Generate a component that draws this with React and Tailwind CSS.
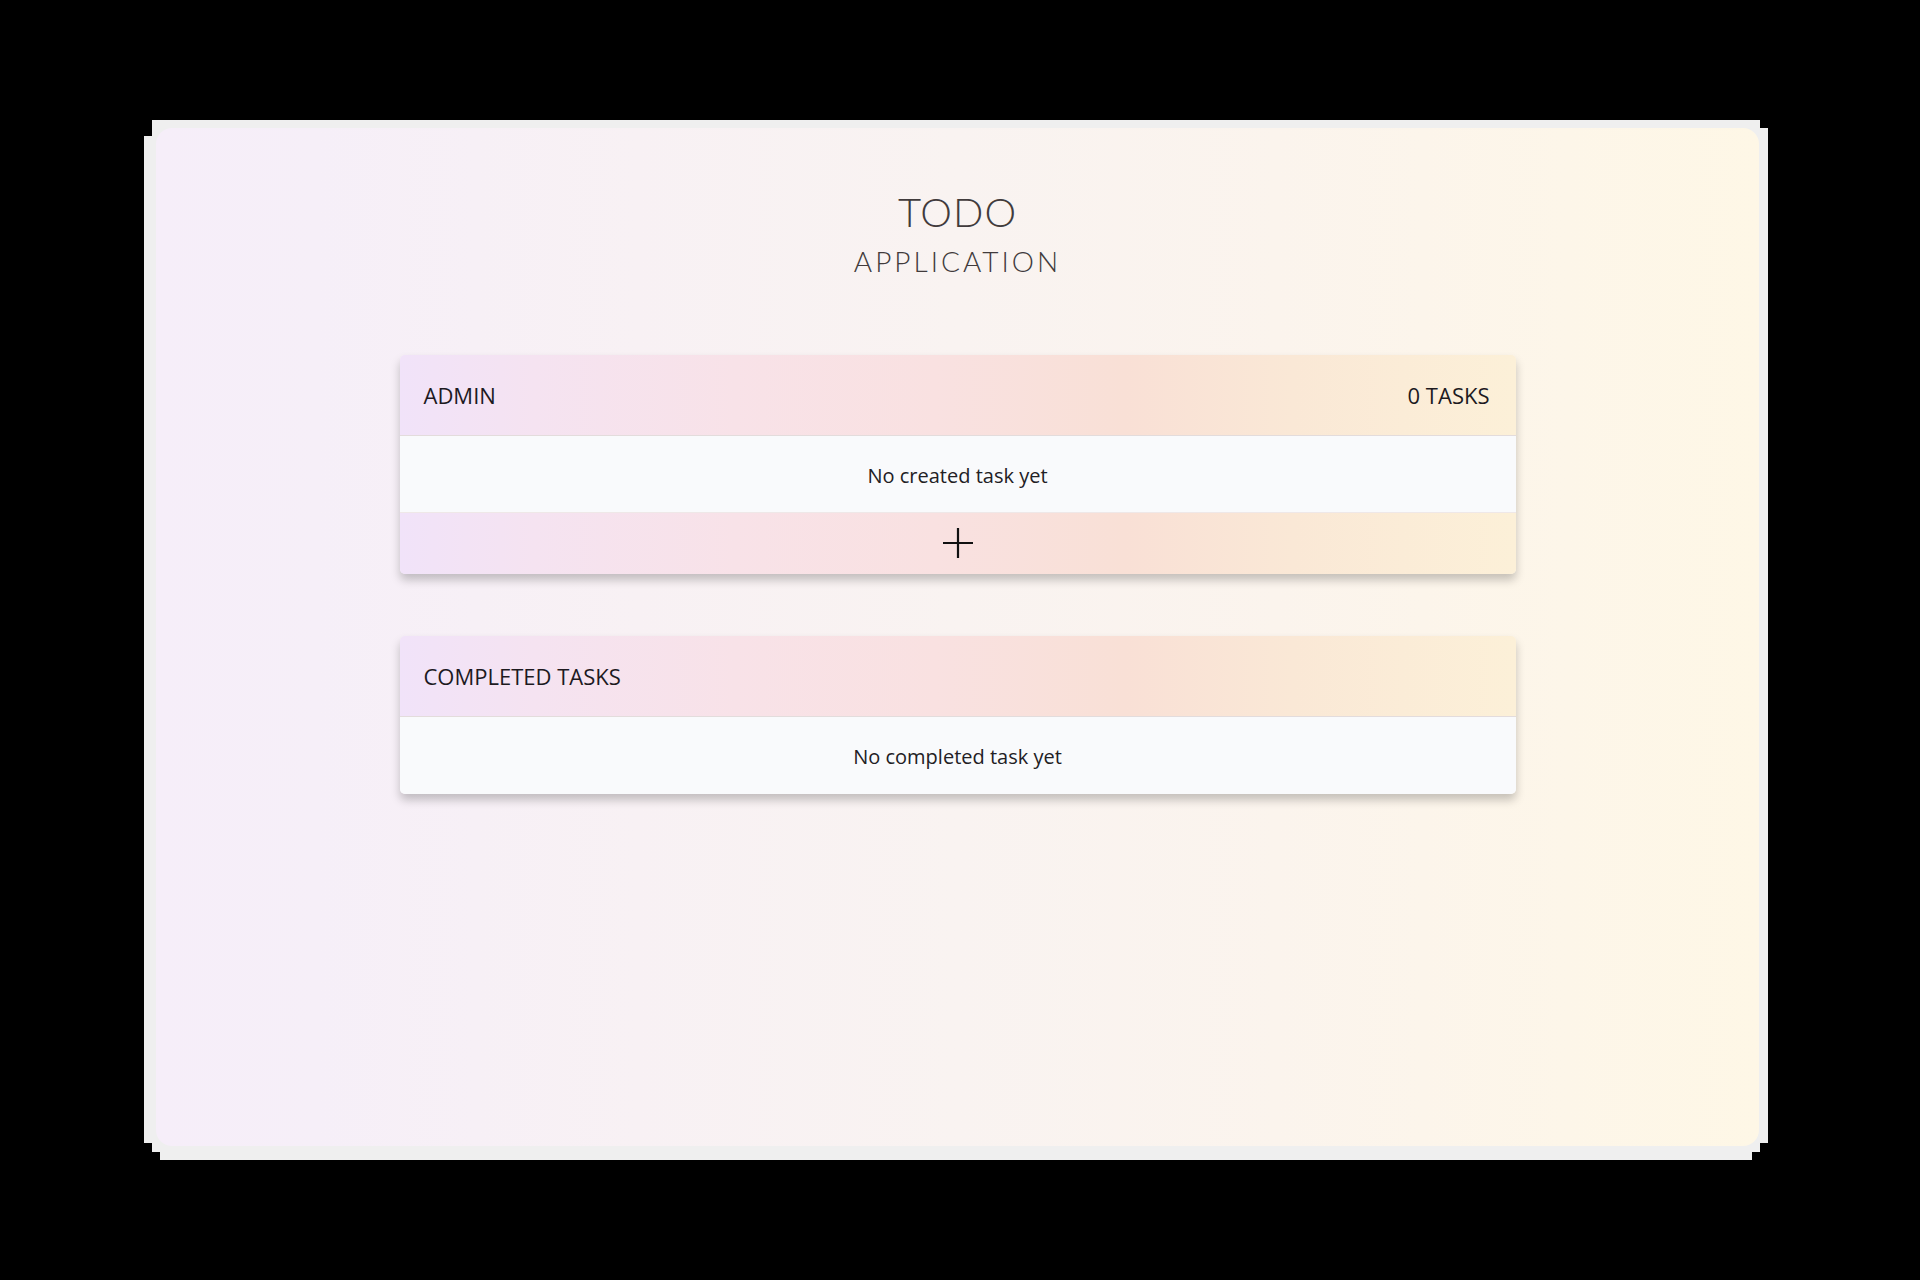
const cardGradient =
  'bg-[linear-gradient(90deg,#f1e3f9_0%,#f5e3f1_12%,#f8e2e8_30%,#f9e1e1_48%,#f9e0d6_65%,#fae8d6_80%,#fcf0d8_100%)]';

function CardHeader({ title, right }) {
  return (
    <div className={`${cardGradient} h-[81px] flex items-center justify-between px-6 border-b border-[#e3dcdc]`}>
      <span className="text-[22px] text-[#1d1a1f]">{title}</span>
      {right && <span className="text-[22px] text-[#1d1a1f] pr-[2px]">{right}</span>}
    </div>
  );
}

function EmptyRow({ text, height }) {
  return (
    <div className={`bg-[#f9fafc] ${height} flex items-center justify-center pt-[3px]`}>
      <span className="text-[20px] text-[#222024]">{text}</span>
    </div>
  );
}

export default function App() {
  return (
    <div className="min-h-[1280px] bg-black pt-[120px] pl-[144px] font-['Open_Sans',sans-serif]">
      <div className="w-[1624px] h-[1040px] bg-[#efefef] pt-[8px] pl-[12px] pr-[9px] pb-[14px] [clip-path:polygon(8px_0,1616px_0,1616px_8px,1624px_8px,1624px_1023px,1616px_1023px,1616px_1032px,1608px_1032px,1608px_1040px,16px_1040px,16px_1032px,8px_1032px,8px_1023px,0_1023px,0_16px,8px_16px)]">
        <div className="h-full rounded-[16px] bg-[linear-gradient(90deg,#f6eef9_0%,#f6eff8_10%,#f8f1f4_30%,#f9f3f1_50%,#fbf4ed_70%,#fdf6e9_88%,#fef7e6_100%)] flex flex-col items-center pt-[60px]">
          <div className="flex flex-col items-center font-['Lato',sans-serif] font-light text-[#413b3c]">
            <h1 className="text-[40px] leading-[48px] tracking-[1px]">TODO</h1>
            <h2 className="text-[28px] leading-[36px] tracking-[3px] mt-[7px]">APPLICATION</h2>
          </div>

          <div className="w-[1116px] mt-[76px] rounded-[5px] overflow-hidden shadow-[0_6px_10px_rgba(0,0,0,0.22)]">
            <CardHeader title="ADMIN" right="0 TASKS" />
            <EmptyRow text="No created task yet" height="h-[76px]" />
            <button className={`${cardGradient} w-full h-[62px] flex items-center justify-center border-t border-[#efe8e8]`}>
              <svg width="32" height="32" viewBox="0 0 32 32" className="mt-[-2px]">
                <path d="M16 1v30M1 16h30" stroke="#111" strokeWidth="2.2" fill="none" />
              </svg>
            </button>
          </div>

          <div className="w-[1116px] mt-[62px] rounded-[5px] overflow-hidden shadow-[0_6px_10px_rgba(0,0,0,0.22)]">
            <CardHeader title="COMPLETED TASKS" />
            <EmptyRow text="No completed task yet" height="h-[77px]" />
          </div>
        </div>
      </div>
    </div>
  );
}
